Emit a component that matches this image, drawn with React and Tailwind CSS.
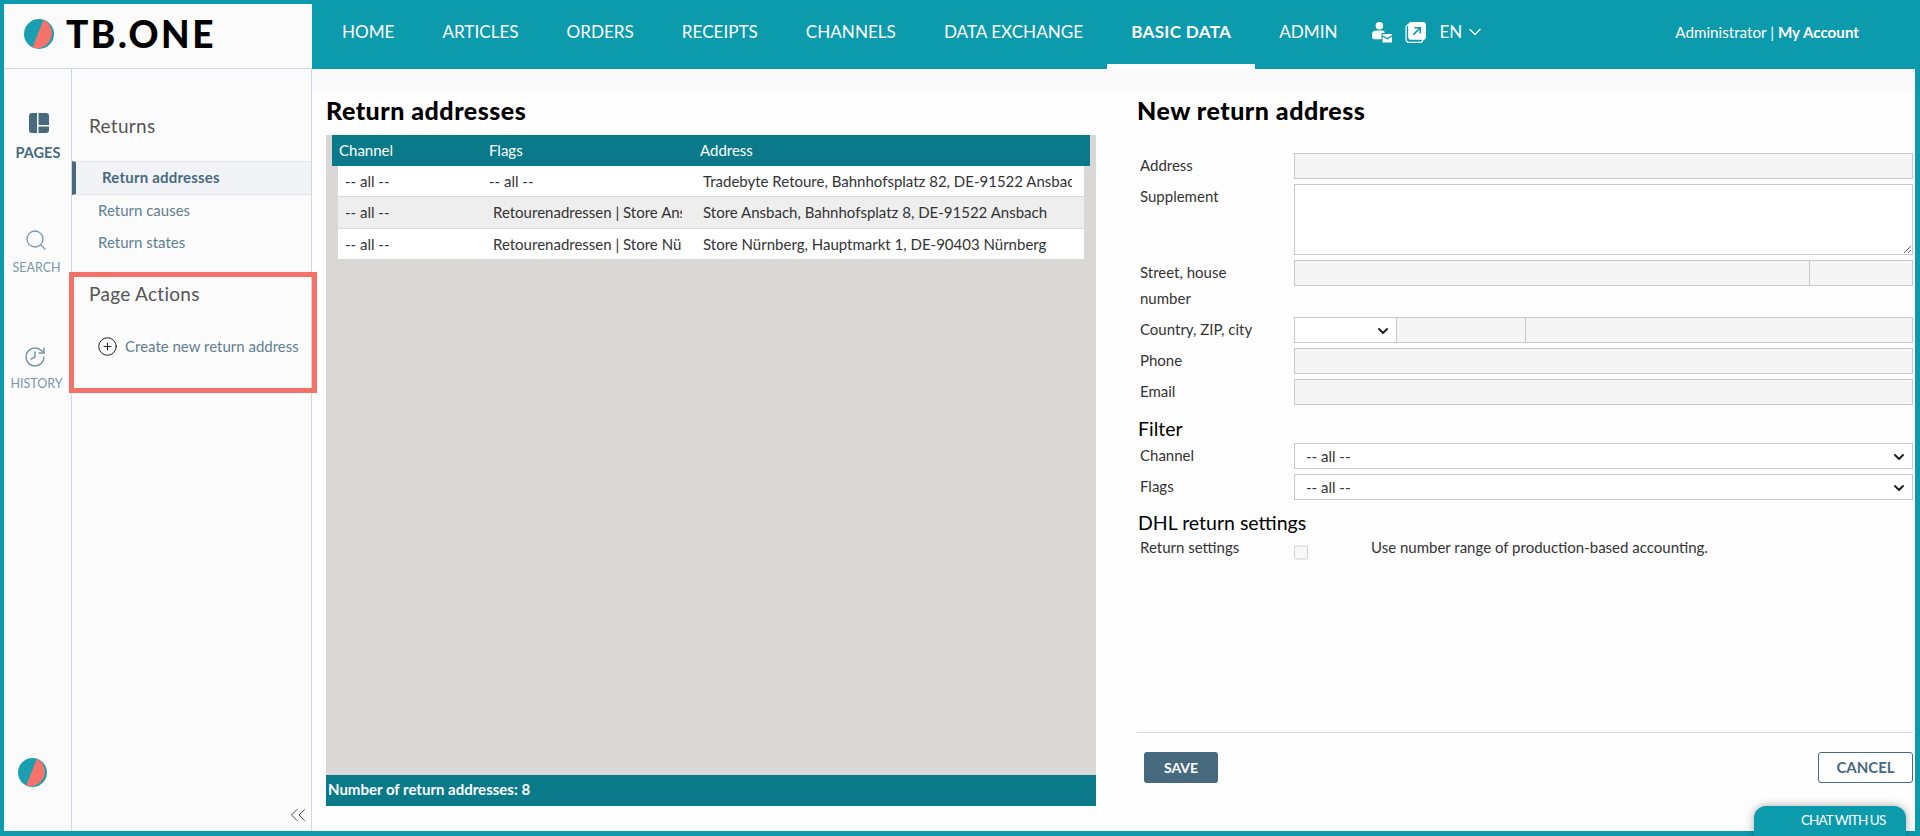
import { ChevronDown, ChevronsLeft, Search, History, CirclePlus } from "lucide-react";

const tabs = ["HOME", "ARTICLES", "ORDERS", "RECEIPTS", "CHANNELS", "DATA EXCHANGE", "BASIC DATA", "ADMIN"];

const rows = [
  { flags: "-- all --", address: "Tradebyte Retoure, Bahnhofsplatz 82, DE-91522 Ansbach" },
  { flags: "Retourenadressen | Store Ansbach", address: "Store Ansbach, Bahnhofsplatz 8, DE-91522 Ansbach", shaded: true, indent: true },
  { flags: "Retourenadressen | Store Nürnberg", address: "Store Nürnberg, Hauptmarkt 1, DE-90403 Nürnberg", indent: true },
];

const Logo = ({ className }) => (
  <svg viewBox="0 0 30 30" className={className}>
    <circle cx="15" cy="15" r="15" fill="#1a9fb0" />
    <path d="M19.5.7A15 15 0 0 1 8.5 28.5Z" fill="#f5736a" />
  </svg>
);

const Input = ({ className = "flex-1" }) => (
  <input disabled className={`${className} h-[26px] min-w-0 border border-[#c8c8c8] bg-[#f5f5f5]`} />
);

const Label = ({ children }) => <div className="-mt-[1px] w-[157px] shrink-0 pl-[3px] pr-[30px] leading-[26px]">{children}</div>;

const Select = ({ className = "flex-1", text }) => (
  <div className={`${className} relative h-[26px] min-w-0`}>
    <select className="h-full w-full appearance-none border border-[#c8c8c8] bg-white pl-[11px] text-[15px] text-[#333]">
      {text && <option>{text}</option>}
    </select>
    <ChevronDown size={16} strokeWidth={3} className="pointer-events-none absolute right-[6px] top-[6px] text-[#222]" />
  </div>
);

export default function App() {
  return (
    <div className="relative flex h-[836px] w-full flex-col overflow-hidden bg-[#0c9aad] font-['Lato',sans-serif] text-[15px] text-[#333]">
      {/* top bar */}
      <header className="flex h-[69px] shrink-0 pl-[4px] pt-[4px] text-white">
        <div className="flex w-[308px] shrink-0 items-center gap-[12px] border-b border-[#d0d8e4] bg-[#fbfbfb] pb-[5px] pl-[20px]">
          <Logo className="h-[30px] w-[30px]" />
          <span className="text-[37px] font-black leading-none tracking-[2.5px] text-black">TB.ONE</span>
        </div>
        <nav className="-mt-[4px] flex pl-[6px]">
          {tabs.map((tab) => (
            <div
              key={tab}
              className={`flex items-center px-[24px] text-[17.1px] ${
                tab === "BASIC DATA" ? "border-b-[5px] border-white pb-0 font-bold tracking-[0.3px]" : "pb-[5px]"
              }`}
            >
              {tab}
            </div>
          ))}
        </nav>
        <div className="-mt-[4px] ml-[10px] flex items-center pb-[5px]">
          <svg viewBox="0 0 20 20" className="h-[21px] w-[21px]" fill="white">
            <circle cx="8" cy="3.6" r="3.6" />
            <path d="M1 11.5C1 9.3 3 8.2 5.500 8.200h5C12 8.200 13 9 13 10.500H10v6H3.500C2 16.500 1 15.500 1 14Z" />
            <path d="M11 11.500h9v1.200l-4.500 2.600-4.500-2.600ZM11 14l4.500 2.600L20 14v5.500h-9Z" />
          </svg>
          <svg viewBox="0 0 20 20" className="ml-[13px] h-[21px] w-[21px]" fill="none">
            <rect x="1" y="2.500" width="16" height="17" rx="3" stroke="white" strokeWidth="1.200" />
            <rect x="3" y="0" width="17" height="17" rx="3" fill="white" />
            <path d="M8 12l6-6M9 5.500h5.500V11" stroke="#0c9aad" strokeWidth="1.500" />
          </svg>
          <span className="ml-[13px] text-[17px]">EN</span>
          <ChevronDown size={20} strokeWidth={1.6} className="ml-[3px]" />
        </div>
        <div className="-mt-[4px] ml-auto flex items-center pb-[5px] pr-[61px] text-[15.2px]">
          Administrator&nbsp;|&nbsp;<b>My Account</b>
        </div>
      </header>

      {/* body */}
      <div className="flex min-h-0 flex-1 pb-[5px] pl-[4px] pr-[5px]">
        {/* icon rail */}
        <aside className="flex w-[68px] shrink-0 flex-col items-center border-r border-[#d0d8e4] bg-[#fbfbfb]">
          <svg viewBox="0 0 20 20" className="mt-[44px] ml-[2px] h-[20px] w-[20px]" fill="#476a7f">
            <path d="M3 0h5v20H3a3 3 0 0 1-3-3V3a3 3 0 0 1 3-3ZM9.500 0H17a3 3 0 0 1 3 3v9H9.500ZM9.500 13.500H20V17a3 3 0 0 1-3 3H9.500Z" />
          </svg>
          <span className="ml-[1px] mt-[10px] text-[14.5px] font-bold leading-[20px] text-[#476a7f]">PAGES</span>
          <Search size={24} strokeWidth={1.3} className="mt-[65px] -ml-[4px] text-[#7a97a8]" />
          <span className="mt-[6px] -ml-[2px] text-[12.5px] leading-[20px] text-[#7a97a8]">SEARCH</span>
          <History size={24} strokeWidth={1.5} className="mt-[67px] -ml-[5px] -scale-x-100 text-[#7a97a8]" />
          <span className="mt-[5px] -ml-[2px] text-[12.5px] leading-[20px] text-[#7a97a8]">HISTORY</span>
          <Logo className="mb-[44px] mr-[11px] mt-auto h-[29px] w-[29px]" />
        </aside>

        {/* sub navigation */}
        <aside className="flex w-[240px] shrink-0 flex-col border-r border-[#d0d8e4] bg-[#fbfbfb]">
          <div className="mt-[45px] pl-[17px] text-[19px] leading-[24px] tracking-[0.3px] text-[#555]">Returns</div>
          <div className="mt-[23px] flex h-[34px] items-center border-y border-l-[4px] border-[#e5e7eb] border-l-[#476a7f] bg-[#f2f3f6] pb-[1px] pl-[26px] font-bold tracking-[0.2px] text-[#476a7f]">
            Return addresses
          </div>
          <div className="mt-[3px] pl-[26px] leading-[24px] text-[#5e7f92]">Return causes</div>
          <div className="mt-[8px] pl-[26px] leading-[24px] text-[#5e7f92]">Return states</div>
          <div className="mt-[28px] pl-[17px] text-[19px] leading-[24px] tracking-[0.3px] text-[#555]">Page Actions</div>
          <div className="mt-[28px] flex items-center pl-[25px] text-[#5e7f92]">
            <CirclePlus size={21} strokeWidth={1} className="text-black" />
            <span className="ml-[7px] leading-[24px]">Create new return address</span>
          </div>
          <ChevronsLeft size={26} strokeWidth={0.9} className="mb-[3px] ml-auto mt-auto text-[#444]" />
        </aside>

        {/* main */}
        <main className="flex min-w-0 flex-1 flex-col bg-[#fafafa]">
          <div className="h-[23px] shrink-0" />
          <div className="flex min-h-0 flex-1 bg-[#fefefe] pl-[14px]">
            {/* list */}
            <section className="flex w-[770px] shrink-0 flex-col">
              <h1 className="h-[43px] shrink-0 pt-[5px] text-[25px] font-black leading-[26px] tracking-[0.5px] text-black">Return addresses</h1>
              <div className="flex h-[671px] flex-col bg-[#d9d8d6]">
                <div className="mx-[6px] flex h-[31px] shrink-0 items-center bg-[#0a7a8a] pb-[1px] text-white">
                  <div className="w-[157px] pl-[7px]">Channel</div>
                  <div className="w-[211px]">Flags</div>
                  <div>Address</div>
                </div>
                <div className="mx-[12px] flex flex-col gap-[1px]">
                  {rows.map((row, i) => (
                    <div key={i} className={`flex items-center ${row.shaded ? "h-[31px] bg-[#eeeeee]" : "h-[30px] bg-white"}`}>
                      <div className="w-[151px] shrink-0 pl-[7px]">-- all --</div>
                      <div className={`w-[193px] shrink-0 overflow-hidden whitespace-nowrap ${row.indent ? "pl-[4px]" : ""}`}>
                        {row.flags}
                      </div>
                      <div className="ml-[21px] w-[369px] shrink-0 overflow-hidden whitespace-nowrap">{row.address}</div>
                    </div>
                  ))}
                </div>
                <div className="mt-auto flex h-[31px] shrink-0 items-center bg-[#0a7a8a] pb-[3px] pl-[2px] font-bold text-white">
                  Number of return addresses: 8
                </div>
              </div>
            </section>

            {/* form */}
            <section className="ml-[41px] flex w-[776px] shrink-0 flex-col">
              <h1 className="h-[61px] shrink-0 pt-[5px] text-[25px] font-black leading-[26px] tracking-[0.5px] text-black">New return address</h1>
              <div className="flex flex-col gap-[5px]">
                <div className="flex">
                  <Label>Address</Label>
                  <Input />
                </div>
                <div className="flex">
                  <Label>Supplement</Label>
                  <textarea className="h-[71px] flex-1 border border-[#c8c8c8] bg-white" />
                </div>
                <div className="mb-[1px] flex">
                  <Label>Street, house number</Label>
                  <Input />
                  <Input className="w-[103px] border-l-0" />
                </div>
                <div className="flex">
                  <Label>Country, ZIP, city</Label>
                  <Select className="w-[103px] shrink-0" />
                  <Input className="w-[129px] shrink-0 border-l-0" />
                  <Input className="flex-1 border-l-0" />
                </div>
                <div className="flex">
                  <Label>Phone</Label>
                  <Input />
                </div>
                <div className="flex">
                  <Label>Email</Label>
                  <Input />
                </div>
              </div>
              <h2 className="h-[38px] pl-[1px] pt-[12px] text-[19.500px] leading-[24px] text-black">Filter</h2>
              <div className="flex flex-col gap-[5px]">
                <div className="flex">
                  <Label>Channel</Label>
                  <Select text="-- all --" />
                </div>
                <div className="flex">
                  <Label>Flags</Label>
                  <Select text="-- all --" />
                </div>
              </div>
              <h2 className="h-[36px] pl-[1px] pt-[11px] text-[19.500px] leading-[24px] text-black">DHL return settings</h2>
              <div className="flex leading-[22px]">
                <div className="w-[157px] shrink-0 pl-[3px]">Return settings</div>
                <input type="checkbox" disabled className="mt-[9px] h-[15px] w-[14px]" />
                <div className="ml-[63px]">Use number range of production-based accounting.</div>
              </div>
              <div className="mt-auto flex justify-between border-t border-[#d0d8e4] pb-[48px] pl-[7px] pt-[19px]">
                <button className="h-[31px] w-[74px] rounded-[3px] bg-[#476a7f] text-[14px] font-bold text-white">SAVE</button>
                <button className="h-[31px] w-[95px] rounded-[3px] border border-[#476a7f] bg-white text-[15px] font-bold text-[#476a7f]">
                  CANCEL
                </button>
              </div>
            </section>
          </div>
        </main>
      </div>

      {/* chat tab */}
      <div className="absolute bottom-0 right-[14px] flex h-[30px] w-[152px] items-center rounded-t-[12px] bg-[#0c9aad] pb-[1px] pl-[47px] text-[13.500px] tracking-[-0.9px] text-white shadow-[0_0_10px_rgba(0,0,0,0.35)]">
        CHAT WITH US
      </div>

      {/* annotation frame */}
      <div className="absolute left-[69px] top-[272px] h-[121px] w-[248px] border-[5px] border-[#f57167]" />
    </div>
  );
}
